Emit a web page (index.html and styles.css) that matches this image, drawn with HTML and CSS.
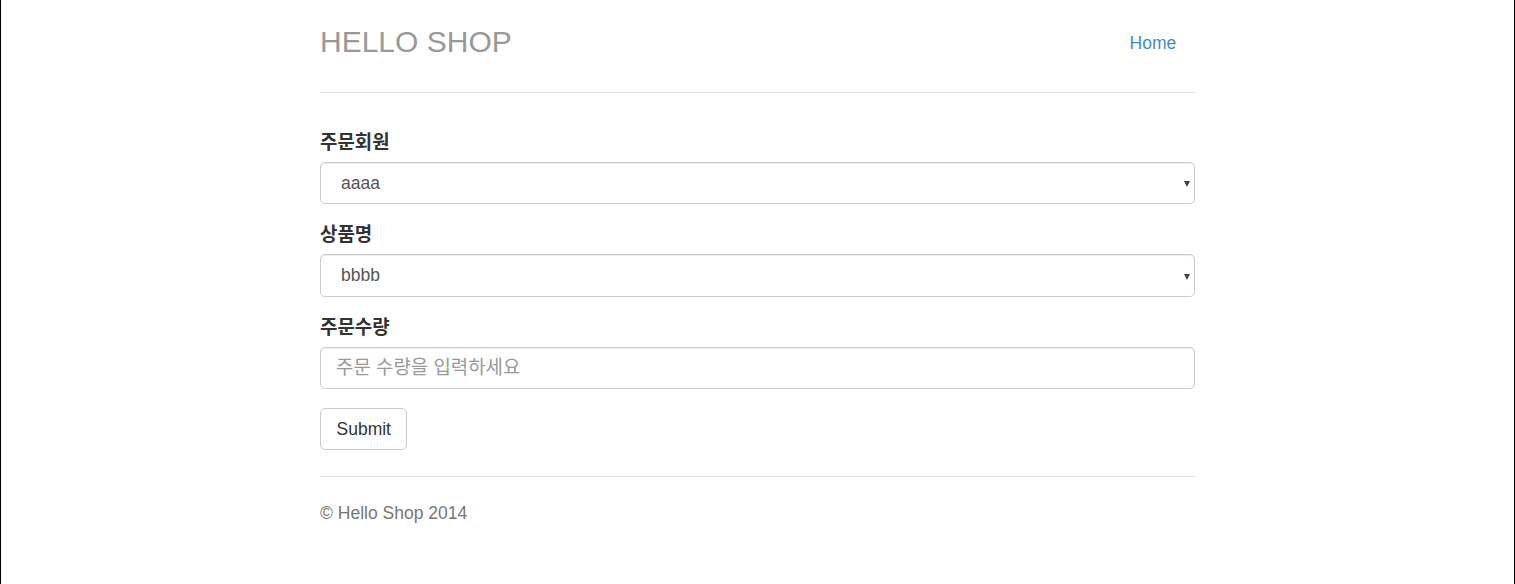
FILE: index.html
```html
<!DOCTYPE html>
<html lang="ko">
<head>
<meta charset="utf-8">
<title>Hello Shop</title>
<link rel="stylesheet" href="styles.css">
</head>
<body>
<div class="page">
  <div class="container">
    <header class="header">
      <h3 class="brand">HELLO SHOP</h3>
      <nav class="nav">
        <a class="nav-link" href="#">Home</a>
      </nav>
    </header>

    <form class="order-form">
      <div class="form-group">
        <label class="form-label" for="member">주문회원</label>
        <div class="select-wrap">
          <select id="member" class="control select">
            <option>aaaa</option>
          </select>
        </div>
      </div>
      <div class="form-group">
        <label class="form-label" for="item">상품명</label>
        <div class="select-wrap">
          <select id="item" class="control select">
            <option>bbbb</option>
          </select>
        </div>
      </div>
      <div class="form-group">
        <label class="form-label" for="count">주문수량</label>
        <input id="count" class="control" type="number" placeholder="주문 수량을 입력하세요">
      </div>
      <button type="submit" class="btn">Submit</button>
    </form>

    <footer class="footer">
      <p class="copy">© Hello Shop 2014</p>
    </footer>
  </div>
</div>
</body>
</html>
```
FILE: styles.css
```css
html, body {
  margin: 0;
  padding: 0;
}

body {
  font-family: "Liberation Sans", Arial, "Noto Sans CJK KR", sans-serif;
  font-size: 17.5px;
  line-height: 25px;
  color: #333;
  background: #fff;
}

.page {
  min-height: 584px;
  box-sizing: border-box;
  border-left: 1px solid #000;
  border-right: 1px solid #000;
}

.container {
  width: 875px;
  margin: 0 auto;
}

.header {
  display: flex;
  justify-content: space-between;
  align-items: flex-start;
  padding-top: 17px;
  border-bottom: 1px solid #e5e5e5;
}

.brand {
  margin: 0;
  padding-bottom: 25px;
  font-size: 30px;
  font-weight: normal;
  line-height: 50px;
  color: #999;
}

.nav {
  display: flex;
  padding-top: 1px;
}

.nav-link {
  display: block;
  padding: 12.5px 18.75px;
  color: #428bca;
  text-decoration: none;
  line-height: 25px;
}

.order-form {
  padding-top: 37.5px;
}

.form-group {
  margin-bottom: 18.75px;
}

.form-label {
  display: block;
  margin-bottom: 12.25px;
  font-weight: bold;
  font-family: "Noto Sans CJK KR", "Liberation Sans", sans-serif;
  font-size: 18.9px;
  line-height: 19px;
  color: #333;
}

.control {
  display: block;
  width: 100%;
  height: 42.5px;
  box-sizing: border-box;
  padding: 7.5px 15px;
  font-family: "Liberation Sans", Arial, "Noto Sans CJK KR", sans-serif;
  font-size: 17.5px;
  line-height: 25px;
  color: #555;
  background: #fff;
  border: 1px solid #ccc;
  border-radius: 5px;
  box-shadow: inset 0 1px 1px rgba(0, 0, 0, 0.075);
  outline: none;
}

.control::placeholder {
  color: #999;
  font-family: "Noto Sans CJK KR", sans-serif;
  font-size: 18.9px;
}

.control::-webkit-outer-spin-button,
.control::-webkit-inner-spin-button {
  -webkit-appearance: none;
  margin: 0;
}

.select-wrap {
  position: relative;
}

.select {
  -webkit-appearance: none;
  appearance: none;
  padding-left: 20px;
}

.select-wrap::after {
  content: "";
  position: absolute;
  right: 5px;
  top: 50%;
  margin-top: -2px;
  border-left: 3px solid transparent;
  border-right: 3px solid transparent;
  border-top: 6px solid #444;
  pointer-events: none;
}

.btn {
  display: inline-block;
  padding: 7.5px 15.5px;
  font-family: "Liberation Sans", Arial, sans-serif;
  font-size: 17.5px;
  line-height: 25px;
  color: #333;
  background: #fff;
  border: 1px solid #ccc;
  border-radius: 5px;
  cursor: pointer;
}

.footer {
  margin-top: 26px;
  padding-top: 23.75px;
  border-top: 1px solid #e5e5e5;
  color: #777;
}

.copy {
  margin: 0;
}
```
